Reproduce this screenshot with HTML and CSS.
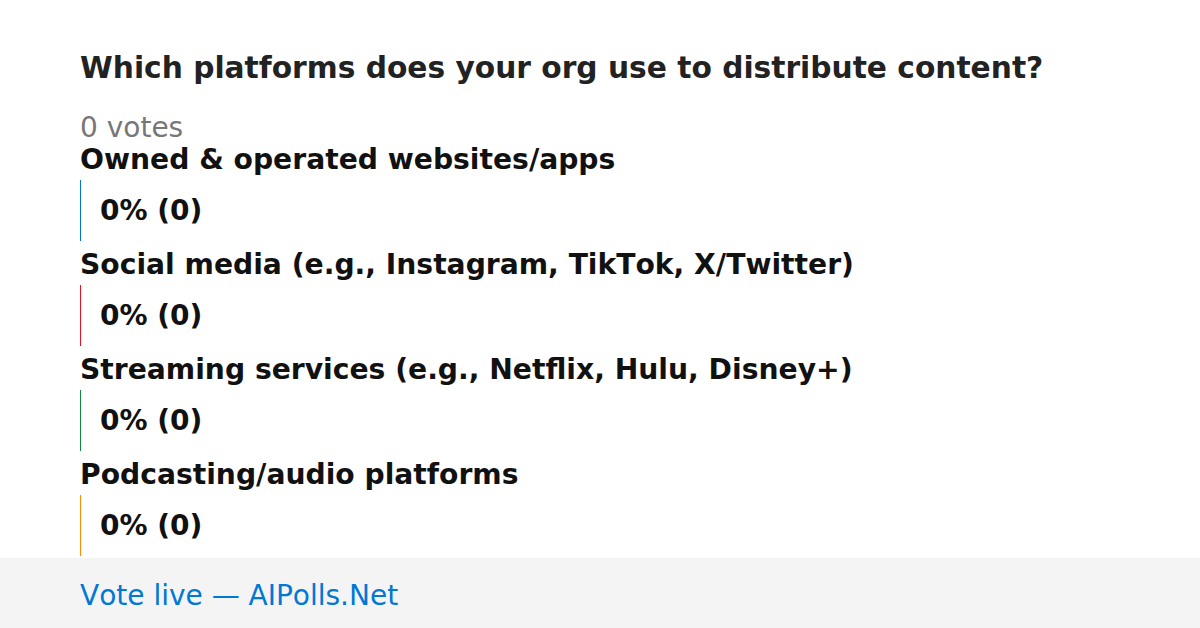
FILE: index.html
```html
<!DOCTYPE html>
<html lang="en">
<head>
  <meta charset="UTF-8">
  <meta name="viewport" content="width=device-width, initial-scale=1.0">
  <title>Poll</title>
  <link rel="stylesheet" href="styles.css">
</head>
<body>
  <div class="poll">
    <h1 class="question">Which platforms does your org use to distribute content?</h1>
    <div class="votes">0 votes</div>

    <div class="option">
      <div class="label">Owned &amp; operated websites/apps</div>
      <div class="bar blue">0% (0)</div>
    </div>
    <div class="option">
      <div class="label">Social media (e.g., Instagram, TikTok, X/Twitter)</div>
      <div class="bar red">0% (0)</div>
    </div>
    <div class="option">
      <div class="label">Streaming services (e.g., Netflix, Hulu, Disney+)</div>
      <div class="bar green">0% (0)</div>
    </div>
    <div class="option">
      <div class="label">Podcasting/audio platforms</div>
      <div class="bar orange">0% (0)</div>
    </div>
  </div>

  <div class="footer">Vote live — AIPolls.Net</div>
</body>
</html>
```

FILE: styles.css
```css
body {
  margin: 0;
  font-family: "DejaVu Sans", sans-serif;
  font-kerning: none;
  background: #fff;
  width: 1200px;
  height: 628px;
  overflow: hidden;
}

.poll {
  padding: 51px 80px 0;
  height: 507px;
}

.question {
  margin: 0 0 27px;
  font-size: 29.7px;
  line-height: 34px;
  font-weight: bold;
  color: #222;
}

.votes {
  padding-top: 1px;
  font-size: 28px;
  line-height: 30px;
  color: #777;
  margin-bottom: 1px;
}

.option {
  margin-bottom: 8px;
}

.label {
  padding-top: 1px;
  font-size: 28.2px;
  line-height: 30px;
  font-weight: bold;
  color: #111;
  margin-bottom: 5px;
}

.bar {
  height: 61px;
  display: flex;
  align-items: center;
  padding-left: 19px;
  border-left: 1px solid;
  font-size: 28px;
  font-weight: bold;
  color: #111;
}

.blue { border-color: #0078d4; }
.red { border-color: #e81123; }
.green { border-color: #10893e; }
.orange { border-color: #ff8c00; }

.footer {
  background: #f4f4f4;
  height: 70px;
  box-sizing: border-box;
  padding: 4px 80px 0;
  line-height: 68px;
  font-size: 28px;
  color: #0078d4;
}
```
